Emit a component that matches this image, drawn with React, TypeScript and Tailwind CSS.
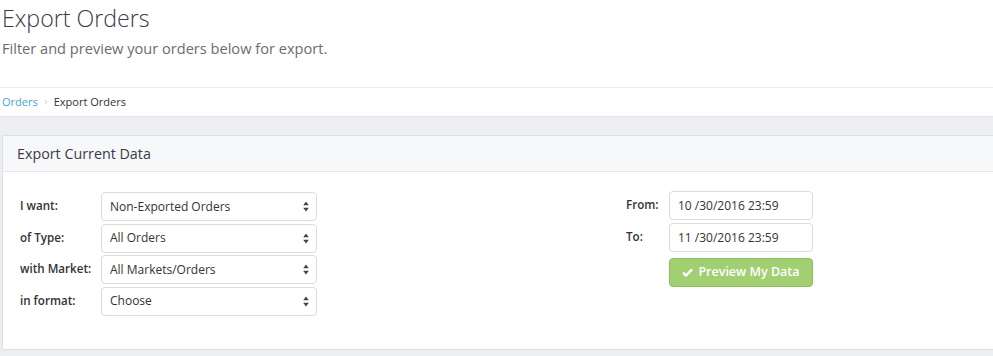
import { ChevronRight } from "lucide-react";

type SelectProps = {
  value: string;
};

function FakeSelect({ value }: SelectProps) {
  return (
    <div className="h-[29px] w-[216px] rounded-[4px] border border-[#d9dce0] bg-white flex items-center justify-between pl-[8px] pr-[7px] text-[12px] text-[#333]">
      <span>{value}</span>
      <svg width="6" height="11" viewBox="0 0 6 11" className="text-[#444]">
        <path d="M3 0.5 L5.8 4.3 L0.2 4.3 Z" fill="currentColor" />
        <path d="M3 10.5 L5.8 6.7 L0.2 6.7 Z" fill="currentColor" />
      </svg>
    </div>
  );
}

const rows = [
  { label: "I want:", value: "Non-Exported Orders" },
  { label: "of Type:", value: "All Orders" },
  { label: "with Market:", value: "All Markets/Orders" },
  { label: "in format:", value: "Choose" },
];

export default function App() {
  return (
    <div className="w-[993px] h-[356px] overflow-hidden bg-white font-['Open_Sans',sans-serif]">
      <div className="h-[88px] border-b border-[#ebedf0] px-[2px] pt-[2px]">
        <h1 className="text-[23.2px] leading-[32px] font-light text-[#3a3a4c]">Export Orders</h1>
        <p className="mt-[4px] text-[14.6px] leading-[20px] text-[#6c6c6c]">
          Filter and preview your orders below for export.
        </p>
      </div>

      <div className="h-[28px] flex items-center px-[2px] text-[11px]">
        <a className="text-[#3fa6c9]">Orders</a>
        <ChevronRight className="mx-[4px] text-[#b5b5b5]" size={8} strokeWidth={2} />
        <span className="text-[#333]">Export Orders</span>
      </div>

      <div className="border-t border-[#dfe2e6] bg-[#eceef2] pt-[18px] pl-[2px] h-[240px]">
        <div className="border-t border-l border-b border-[#dde0e5] bg-white">
          <div className="h-[36px] border-b border-[#e3e5e9] bg-[#f7f8fa] flex items-center pl-[14px] text-[14.3px] text-[#3a3a4c]">
            Export Current Data
          </div>
          <div className="flex pl-[17px] pt-[20px] pb-[33px]">
            <div className="flex flex-col gap-[2.5px]">
              {rows.map((r) => (
                <div key={r.label} className="flex">
                  <div className="w-[81px] pt-[5px] text-[11.6px] font-semibold text-[#333]">{r.label}</div>
                  <FakeSelect value={r.value} />
                </div>
              ))}
            </div>

            <div className="ml-[309px] -mt-[1px] flex flex-col gap-[3px]">
              <div className="flex">
                <div className="w-[43px] pt-[5px] text-[11.6px] font-semibold text-[#333]">From:</div>
                <div className="h-[29px] w-[144px] rounded-[4px] border border-[#d9dce0] flex items-center pl-[8px] text-[12px] text-[#333]">
                  10 /30/2016 23:59
                </div>
              </div>
              <div className="flex">
                <div className="w-[43px] pt-[5px] text-[11.6px] font-semibold text-[#333]">To:</div>
                <div className="h-[29px] w-[144px] rounded-[4px] border border-[#d9dce0] flex items-center pl-[8px] text-[12px] text-[#333]">
                  11 /30/2016 23:59
                </div>
              </div>
              <div className="flex mt-[3px]">
                <div className="w-[43px]" />
                <button className="h-[29px] w-[144px] rounded-[4px] border border-[#8dbf5c] bg-[#a2cf72] flex items-center justify-center gap-[5px] text-[12.5px] font-semibold text-white">
                  <svg width="11" height="9" viewBox="0 0 11 9">
                    <path d="M1 4.6 L4 7.5 L10 1.3" stroke="white" strokeWidth="2.4" fill="none" />
                  </svg>
                  Preview My Data
                </button>
              </div>
            </div>
          </div>
        </div>
      </div>
    </div>
  );
}
